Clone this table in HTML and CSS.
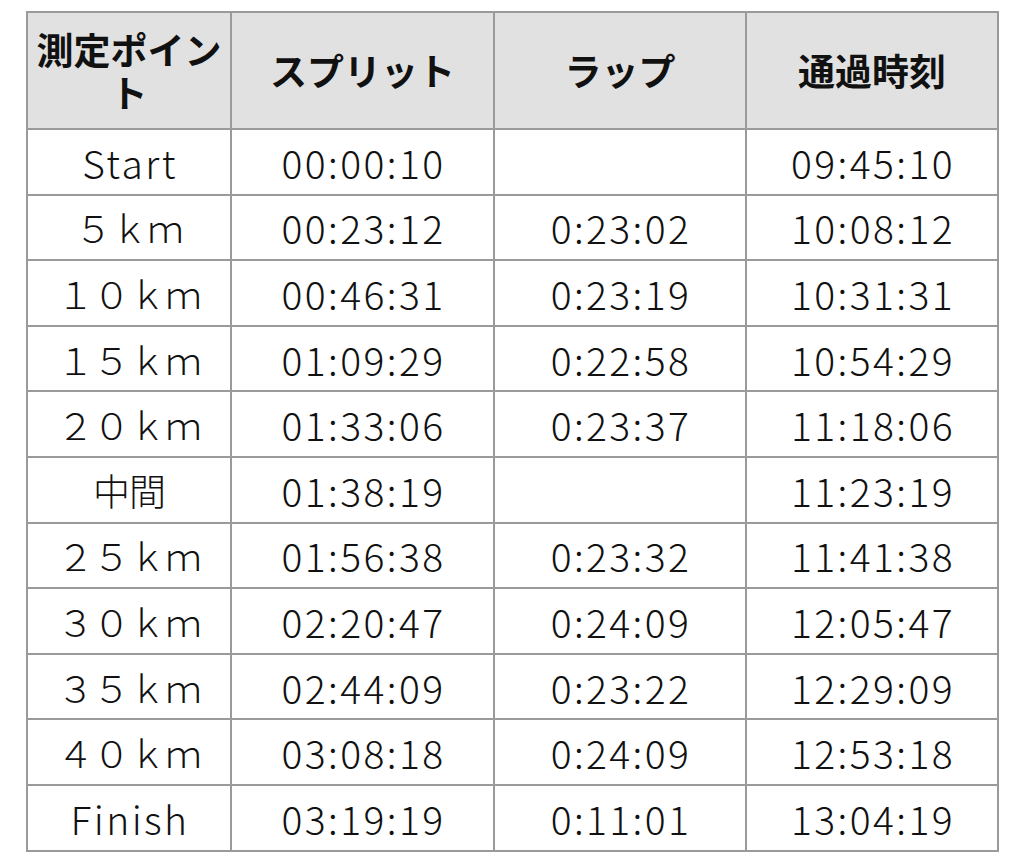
FILE: index.html
```html
<!DOCTYPE html>
<html lang="ja">
<head>
<meta charset="utf-8">
<link rel="stylesheet" href="styles.css">
</head>
<body>
<table class="splits">
  <colgroup>
    <col class="c1"><col class="c2"><col class="c3"><col class="c4">
  </colgroup>
  <thead>
    <tr><th>測定ポイント</th><th>スプリット</th><th>ラップ</th><th>通過時刻</th></tr>
  </thead>
  <tbody>
    <tr><td class="pt">Start</td><td>00:00:10</td><td></td><td>09:45:10</td></tr>
    <tr><td class="pt fw">５ｋｍ</td><td>00:23:12</td><td>0:23:02</td><td>10:08:12</td></tr>
    <tr><td class="pt fw">１０ｋｍ</td><td>00:46:31</td><td>0:23:19</td><td>10:31:31</td></tr>
    <tr><td class="pt fw">１５ｋｍ</td><td>01:09:29</td><td>0:22:58</td><td>10:54:29</td></tr>
    <tr><td class="pt fw">２０ｋｍ</td><td>01:33:06</td><td>0:23:37</td><td>11:18:06</td></tr>
    <tr><td class="pt fw">中間</td><td>01:38:19</td><td></td><td>11:23:19</td></tr>
    <tr><td class="pt fw">２５ｋｍ</td><td>01:56:38</td><td>0:23:32</td><td>11:41:38</td></tr>
    <tr><td class="pt fw">３０ｋｍ</td><td>02:20:47</td><td>0:24:09</td><td>12:05:47</td></tr>
    <tr><td class="pt fw">３５ｋｍ</td><td>02:44:09</td><td>0:23:22</td><td>12:29:09</td></tr>
    <tr><td class="pt fw">４０ｋｍ</td><td>03:08:18</td><td>0:24:09</td><td>12:53:18</td></tr>
    <tr><td class="pt">Finish</td><td>03:19:19</td><td>0:11:01</td><td>13:04:19</td></tr>
  </tbody>
</table>
</body>
</html>
```

FILE: styles.css
```css
html, body {
  margin: 0;
  padding: 0;
  background: #ffffff;
}

body {
  padding: 11px 0 0 26px;
  font-family: "Noto Sans CJK JP", "Noto Sans", sans-serif;
  color: #111111;
}

.splits {
  border-collapse: collapse;
  table-layout: fixed;
  width: 971px;
}

.c1 { width: 204px; }
.c2 { width: 263px; }
.c3 { width: 252px; }
.c4 { width: 252px; }

.splits th,
.splits td {
  border: 2px solid #9a9a9a;
  text-align: center;
  vertical-align: middle;
}

.splits th {
  background: #e1e1e1;
  font-weight: bold;
  font-size: 37px;
  line-height: 43px;
  height: 115px;
  padding: 0;
}

.splits td {
  font-size: 39px;
  line-height: 44px;
  height: 63.6px;
  font-weight: 300;
  letter-spacing: 2.4px;
  padding: 0 0 0 2px;
}

.splits td.fw {
  font-size: 37px;
  letter-spacing: -1px;
  padding: 0;
}
```
